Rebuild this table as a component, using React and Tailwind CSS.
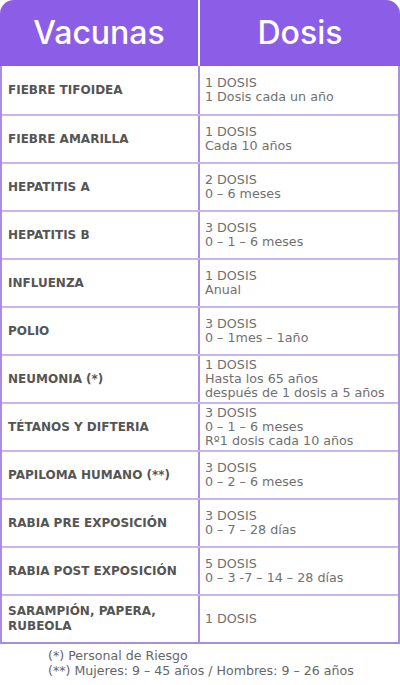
import React from "react";

const rows = [
  ["FIEBRE TIFOIDEA", ["1 DOSIS", "1 Dosis cada un año"]],
  ["FIEBRE AMARILLA", ["1 DOSIS", "Cada 10 años"]],
  ["HEPATITIS A", ["2 DOSIS", "0 – 6 meses"]],
  ["HEPATITIS B", ["3 DOSIS", "0 – 1 – 6 meses"]],
  ["INFLUENZA", ["1 DOSIS", "Anual"]],
  ["POLIO", ["3 DOSIS", "0 – 1mes – 1año"]],
  ["NEUMONIA (*)", ["1 DOSIS", "Hasta los 65 años", "después de 1 dosis a 5 años"]],
  ["TÉTANOS Y DIFTERIA", ["3 DOSIS", "0 – 1 – 6 meses", "Rº1 dosis cada 10 años"]],
  ["PAPILOMA HUMANO (**)", ["3 DOSIS", "0 – 2 – 6 meses"]],
  ["RABIA PRE EXPOSICIÓN", ["3 DOSIS", "0 – 7 – 28 días"]],
  ["RABIA POST EXPOSICIÓN", ["5 DOSIS", "0 – 3 -7 – 14 – 28 días"]],
  ["SARAMPIÓN, PAPERA, RUBEOLA", ["1 DOSIS"]],
];

export default function App() {
  return (
    <div className="w-[400px] h-[685px] bg-white" style={{ fontFamily: '"DejaVu Sans", sans-serif' }}>
      <div className="flex h-[66px] bg-[#8c5ee8] rounded-t-[14px] text-white" style={{ fontFamily: 'Inter, "DejaVu Sans", sans-serif' }}>
        <div className="w-[200px] flex items-center justify-center text-[32px] font-medium border-r-2 border-white">Vacunas</div>
        <div className="flex-1 flex items-center justify-center text-[32px] font-medium">Dosis</div>
      </div>
      <div className="border-x-2 border-b-2 border-[#a98ee0]">
        {rows.map(([name, lines], i) => (
          <div key={i} className={`flex h-[48px] ${i > 0 ? "border-t-2 border-[#c8b6ee]" : ""}`}>
            <div className="w-[198px] flex items-center pl-[6px] pr-1 border-r-2 border-[#a98ee0] text-[12px] font-bold text-[#555] leading-[15px]">
              {name === "SARAMPIÓN, PAPERA, RUBEOLA" ? (<span>SARAMPIÓN, PAPERA,<br />RUBEOLA</span>) : name}
            </div>
            <div className="flex-1 flex flex-col justify-center pl-[5px] text-[12.7px] text-[#707070] leading-[14px]">
              {lines.map((l, j) => (<div key={j}>{l}</div>))}
            </div>
          </div>
        ))}
      </div>
      <div className="pl-[48px] pt-[4px] text-[12.6px] text-[#666] leading-[15px]">
        <div>(*) Personal de Riesgo</div>
        <div>(**) Mujeres: 9 – 45 años / Hombres: 9 – 26 años</div>
      </div>
    </div>
  );
}
